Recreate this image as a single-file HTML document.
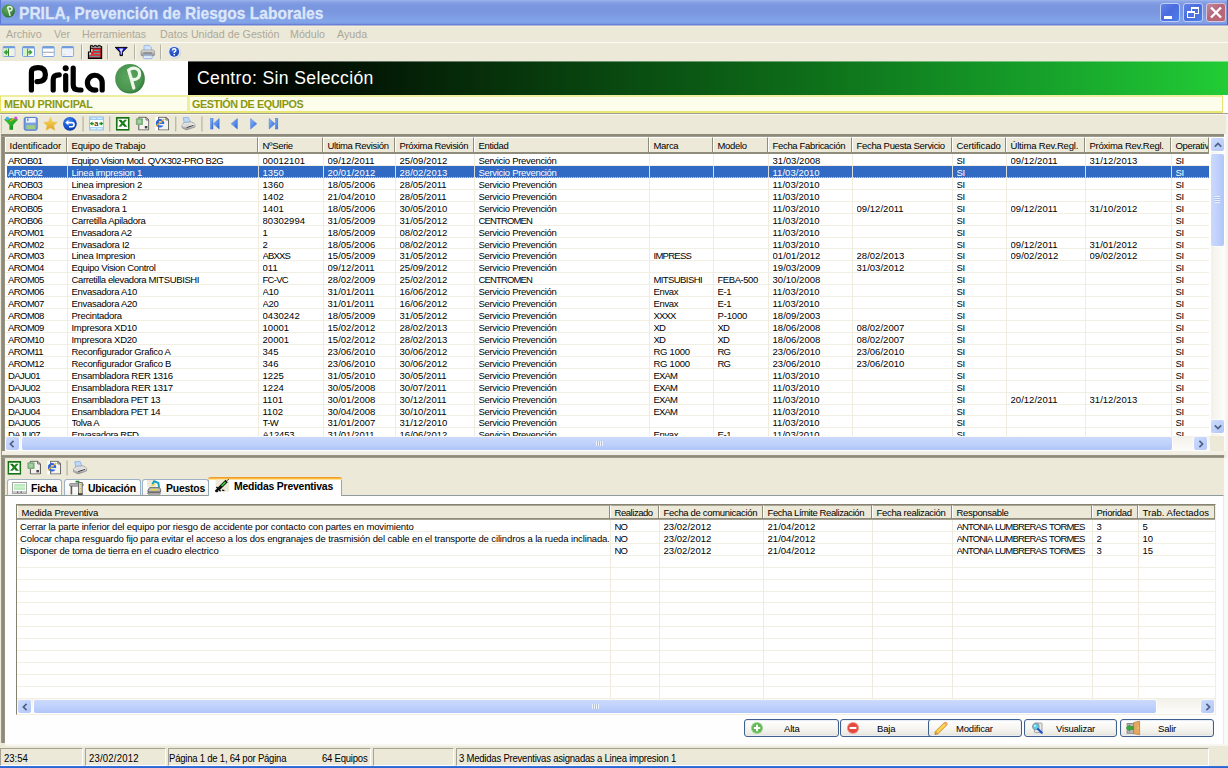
<!DOCTYPE html>
<html><head><meta charset="utf-8"><title>PRILA</title>
<style>
*{box-sizing:border-box;margin:0;padding:0}
html,body{width:1228px;height:768px;overflow:hidden;background:#ECE9D8;font-family:"Liberation Sans",sans-serif;font-size:9px;color:#000}
.abs{position:absolute}
#titlebar{position:absolute;left:0;top:0;width:1228px;height:26px;
 background:linear-gradient(to bottom,#9DB5EC 0px,#86A1E5 2px,#7B97E0 5px,#7A96DF 12px,#7F9EE4 17px,#82A5E8 22px,#7C9AE3 23.5px,#6A80D6 24.5px,#6478D2 25px,#A9B2DC 25.2px,#B5BBDA 26px)}
#titletext{-webkit-text-stroke:0.3px #DCE6FA;position:absolute;left:18.7px;top:4px;font-weight:bold;font-size:17px;color:#DCE6FA;white-space:pre;letter-spacing:0px;line-height:20px;transform:scaleX(0.915);transform-origin:0 0}
.tbtn{position:absolute;top:3px;width:20px;height:19px;border:1px solid #BFCEF4;border-radius:3px;background:linear-gradient(135deg,#6283E8 0%,#4A6BDE 45%,#4C7FE8 100%)}
#menubar{position:absolute;left:0;top:26px;width:1228px;height:17px;background:#ECE9D8;border-top:1px solid #F7EFD3}
.menu{position:absolute;top:27px;font-size:10.7px;color:#ACA899;line-height:14px;white-space:pre}
#tb1{position:absolute;left:0;top:42px;width:1228px;height:19px;border-top:1px solid #FBFAF5}
.vsep{position:absolute;width:2px;border-left:1px solid #C5C2B2;border-right:1px solid #FFFFFF}
#logo{position:absolute;left:0;top:61px;width:188px;height:35px;background:#fff}
#banner{position:absolute;left:188px;top:61px;width:1040px;height:34px;background:linear-gradient(to right,#000 0px,#020a02 110px,#06300a 300px,#0d6a18 600px,#16a02a 850px,#1fc333 1000px,#22cc36 1040px)}
#bannertext{position:absolute;left:9px;top:6px;color:#fff;font-size:17.6px;line-height:22px;white-space:pre;letter-spacing:0.36px}
.ylabel{position:absolute;top:95px;height:18px;background:#FDFDEC;border:2px solid #EFED9E;border-bottom-color:#E9E774;color:#8A9812;font-weight:bold;font-size:10.8px;letter-spacing:-0.25px;line-height:14px;padding-left:2px;white-space:pre}
#tb2{position:absolute;left:0;top:113px;width:1228px;height:21px}
.ic{position:absolute;width:16px;height:16px}
</style></head><body>
<!-- TITLE BAR -->
<div id="titlebar">
 <svg class="abs" style="left:0.8px;top:3.2px" width="16" height="16" viewBox="0 0 16 16">
  <defs><radialGradient id="gball" cx="40%" cy="35%" r="70%"><stop offset="0" stop-color="#5FA85F"/><stop offset="0.7" stop-color="#3C8A40"/><stop offset="1" stop-color="#25602A"/></radialGradient></defs>
  <circle cx="7.4" cy="8" r="6.5" fill="url(#gball)"/>
  <path d="M9 12.4 Q8 8 6.6 4.4 Q9.4 2.6 11 5 Q11.6 7.4 8.6 8" fill="none" stroke="#E8F2E4" stroke-width="1.5" stroke-linecap="round" stroke-linejoin="round"/>
 </svg>
 <div class="abs" style="left:0;top:0;width:1px;height:25px;background:#5F7AD8"></div><div class="abs" style="left:1227px;top:0;width:1px;height:25px;background:#4A62CC"></div><div id="titletext">PRILA, Prevención de Riesgos Laborales</div>
 <div class="tbtn" style="left:1160px"><div class="abs" style="left:3px;top:12px;width:8px;height:3px;background:#fff"></div></div>
 <div class="tbtn" style="left:1183px">
   <div class="abs" style="left:7px;top:3px;width:8px;height:7px;border:1px solid #fff;border-top-width:2px"></div>
   <div class="abs" style="left:3px;top:7px;width:8px;height:7px;border:1px solid #fff;border-top-width:2px;background:#4F74E2"></div>
 </div>
 <div class="tbtn" style="left:1206px;background:linear-gradient(135deg,#C08A9E 0%,#B5677A 45%,#BD6670 100%);border-color:#D9C4DC">
   <svg class="abs" style="left:0;top:0" width="18" height="17" viewBox="0 0 18 17"><path d="M4 3.5 L14 13.5 M14 3.5 L4 13.5" stroke="#fff" stroke-width="2.4" stroke-linecap="butt"/></svg>
 </div>
</div>
<!-- MENU BAR -->
<div id="menubar"></div>
<div class="menu" style="left:6px">Archivo</div>
<div class="menu" style="left:54px">Ver</div>
<div class="menu" style="left:82px">Herramientas</div>
<div class="menu" style="left:160px">Datos Unidad de Gestión</div>
<div class="menu" style="left:290px">Módulo</div>
<div class="menu" style="left:337px">Ayuda</div>
<!-- TOOLBAR 1 -->
<div id="tb1"></div>
<svg class="abs" style="left:0;top:43px" width="190" height="18" viewBox="0 43 190 18">
<defs>
<linearGradient id="winb" x1="0" y1="0" x2="0" y2="1"><stop offset="0" stop-color="#6B97DA"/><stop offset="1" stop-color="#7FA6E2"/></linearGradient>
<linearGradient id="prbody" x1="0" y1="0" x2="0" y2="1"><stop offset="0" stop-color="#E4E4E4"/><stop offset="0.5" stop-color="#B8B8B8"/><stop offset="1" stop-color="#8E8E8E"/></linearGradient>
<radialGradient id="helpg" cx="40%" cy="35%" r="70%"><stop offset="0" stop-color="#3C6CE0"/><stop offset="1" stop-color="#1640B0"/></radialGradient>

</defs>
<!-- icon1 -->
<svg x="2.5" y="46" width="13" height="11" viewBox="0 0 13 11"><rect x="0.5" y="0.5" width="12" height="10" rx="1.2" fill="#fff" stroke="#78A2E0" stroke-width="1"/><rect x="0.5" y="0.5" width="12" height="2" rx="1" fill="#6F9BDC"/></svg>
<rect x="3.5" y="48.5" width="5" height="7.5" fill="#DDF5CF"/>
<rect x="10.5" y="48.5" width="4" height="7.5" fill="#F1F0E6"/>
<rect x="8" y="48.5" width="1" height="7.5" fill="#2E8B2E"/>
<path d="M3.5 52.2 L7 49.2 L7 51.2 L8 51.2 L8 53.2 L7 53.2 L7 55.2 Z" fill="#3FA23F"/>
<!-- icon2 -->
<svg x="22" y="46" width="13" height="11" viewBox="0 0 13 11"><rect x="0.5" y="0.5" width="12" height="10" rx="1.2" fill="#fff" stroke="#78A2E0" stroke-width="1"/><rect x="0.5" y="0.5" width="12" height="2" rx="1" fill="#6F9BDC"/></svg>
<rect x="23" y="48.5" width="5" height="7.5" fill="#D5F5C5"/>
<rect x="27.2" y="48.5" width="1" height="7.5" fill="#2E8B2E"/>
<path d="M32.6 52.2 L29.4 49.2 L29.4 51.2 L28.2 51.2 L28.2 53.2 L29.4 53.2 L29.4 55.2 Z" fill="#3FA23F"/>
<!-- icon3 -->
<svg x="41.8" y="46" width="13" height="11" viewBox="0 0 13 11"><rect x="0.5" y="0.5" width="12" height="10" rx="1.2" fill="#fff" stroke="#78A2E0" stroke-width="1"/><rect x="0.5" y="0.5" width="12" height="2" rx="1" fill="#6F9BDC"/></svg>
<rect x="42.8" y="51.8" width="11" height="0.9" fill="#8C96A8"/>
<rect x="43.8" y="54.3" width="2" height="0.7" fill="#E8C890"/>
<!-- icon4 -->
<svg x="61.2" y="46" width="13" height="11" viewBox="0 0 13 11"><rect x="0.5" y="0.5" width="12" height="10" rx="1.2" fill="#fff" stroke="#78A2E0" stroke-width="1"/><rect x="0.5" y="0.5" width="12" height="2" rx="1" fill="#6F9BDC"/></svg>
<rect x="62.4" y="48.6" width="10.6" height="7.2" fill="#EEF3FB"/>
<rect x="63.2" y="54.3" width="2" height="0.7" fill="#E8C890"/>
<!-- sep -->
<rect x="81" y="44.5" width="1" height="15" fill="#A9A697"/><rect x="82" y="44.5" width="1" height="15" fill="#FAF9F3"/>
<!-- fortress -->
<path d="M90.5 46 L90.5 52 L88.5 52 L88.5 58.3 L101.5 58.3 L101.5 46" fill="none" stroke="#000" stroke-width="1.2"/>
<path d="M90.6 48.6 L90.6 45.4 L92.6 45.4 L92.6 46.6 L94.2 46.6 L94.2 45.4 L96.4 45.4 L96.4 46.6 L98 46.6 L98 45.4 L100.2 45.4 L100.2 46.6 L101.6 46.6 L101.6 48.6 Z" fill="#9C9C9C" stroke="#000" stroke-width="0.9"/>
<rect x="92.5" y="48.6" width="8.6" height="3.4" fill="#E0202A"/>
<rect x="91" y="51.6" width="10.2" height="3.2" fill="#E0202A"/>
<rect x="89.2" y="54.6" width="12" height="3.2" fill="#E0202A"/>
<rect x="94" y="50" width="5.5" height="0.9" fill="#30C8C8"/><rect x="93.5" y="52.8" width="6.5" height="0.9" fill="#30C8C8"/><rect x="90.2" y="55.8" width="9.5" height="0.9" fill="#30C8C8"/>
<rect x="100.8" y="48.5" width="1.3" height="10" fill="#000"/>
<rect x="88.3" y="57.6" width="13.6" height="1.1" fill="#000"/>
<!-- sep -->
<rect x="107.2" y="44.5" width="1" height="15" fill="#A9A697"/><rect x="108.2" y="44.5" width="1" height="15" fill="#FAF9F3"/>
<!-- funnel -->
<path d="M115.2 47.4 L127.2 47.4 L122.4 52.2 L122.4 55.6 L120 55.6 L120 52.2 Z" fill="#1414E8" stroke="#000" stroke-width="1" stroke-linejoin="round"/>
<path d="M119 48.4 L123.4 48.4 L121.8 51.8 L121.8 54.6 L120.7 54.6 L120.7 51.8 Z" fill="#D8DCF0"/>
<!-- sep -->
<rect x="134.2" y="44.5" width="1" height="15" fill="#A9A697"/><rect x="135.2" y="44.5" width="1" height="15" fill="#FAF9F3"/>
<!-- printer -->
<path d="M144 51 L144 46.2 Q144 45.4 144.8 45.4 L149.4 45.4 L151.6 47.6 L151.6 51 Z" fill="#CFE1F8" stroke="#8FB4E6" stroke-width="0.9"/>
<rect x="141" y="50" width="13.6" height="6" rx="1.6" fill="url(#prbody)" stroke="#8A8A8A" stroke-width="0.6"/>
<rect x="143.4" y="52.2" width="8.8" height="1.6" fill="#8C8C8C"/>
<rect x="143.4" y="55.6" width="8.8" height="3" rx="0.8" fill="#E2ECFA" stroke="#8FB4E6" stroke-width="0.9"/>
<!-- sep -->
<rect x="160.2" y="44.5" width="1" height="15" fill="#A9A697"/><rect x="161.2" y="44.5" width="1" height="15" fill="#FAF9F3"/>
<!-- help -->
<circle cx="174.7" cy="52.3" r="6.3" fill="#B9BCC6" opacity=".75"/>
<circle cx="174.2" cy="51.8" r="6.3" fill="#E6E9F1"/>
<circle cx="174.2" cy="51.8" r="4.9" fill="url(#helpg)"/>
<path d="M172.5 50.4 Q172.5 48.7 174.2 48.7 Q175.9 48.7 175.9 50.2 Q175.9 51.2 174.3 52.1 L174.3 53" fill="none" stroke="#fff" stroke-width="1.4"/>
<circle cx="174.3" cy="54.6" r="0.85" fill="#fff"/>
</svg>

<!-- LOGO + BANNER -->
<div id="logo"><svg class="abs" style="left:0;top:0" width="188" height="35" viewBox="0 61 188 35">
<defs><radialGradient id="gball2" cx="45%" cy="45%" r="58%"><stop offset="0" stop-color="#5BA75F"/><stop offset="0.75" stop-color="#4A9650"/><stop offset="0.93" stop-color="#38803F"/><stop offset="1" stop-color="#2A6A32"/></radialGradient></defs>
<g fill="none" stroke="#000" stroke-width="5.2" stroke-linecap="round" stroke-linejoin="round">
<path d="M31.4 90 L31.4 72 Q31.4 67.6 38 67.6 Q45.4 67.6 45.4 74.6 Q45.4 81.6 38 81.6 L37 81.6"/>
<path d="M53.2 90 L53.2 79.5 Q53.2 74.8 59.2 74.8"/>
<path d="M65.7 75.5 L65.7 90"/>
<path d="M73.2 68 L73.2 85 Q73.2 90 79 90 L81 90"/>
<path d="M102.2 90 L102.2 83 A7.4 7.4 0 1 0 95.8 90"/>
</g>
<circle cx="65.7" cy="68.2" r="3" fill="#000"/>
<circle cx="130" cy="78.8" r="14.8" fill="url(#gball2)"/>
<path d="M133.8 88 Q131.6 80 128.6 70 Q133.6 66.6 138 69.6 Q141 73.4 138.4 77.6 Q135.6 80.2 132.2 79.4" fill="none" stroke="#EEF5EA" stroke-width="3.2" stroke-linecap="round" stroke-linejoin="round"/>
</svg>
</div>
<div class="abs" style="left:188px;top:61px;width:1040px;height:1px;background:#fff;z-index:2;opacity:.4"></div><div id="banner"><div id="bannertext">Centro: Sin Selección</div></div>
<div class="ylabel" style="left:0;width:188px;border-right:none;border-left:1px solid #E8E664;padding-left:3px">MENU PRINCIPAL</div>
<div class="abs" style="left:1223px;top:95px;width:5px;height:18px;background:#fff"></div><div class="ylabel" style="left:187px;width:1036px;border-left-width:3px;border-right:1px solid #E6E46E;letter-spacing:-0.42px">GESTIÓN DE EQUIPOS</div>
<!-- TOOLBAR 2 -->
<div id="tb2"></div>
<div class="abs" style="left:0;top:113px;width:1228px;height:1px;background:#A19E8F"></div>
<div class="abs" style="left:0;top:114px;width:1228px;height:1px;background:#F9F7F0"></div>
<svg class="abs" style="left:0;top:115px" width="290" height="18" viewBox="0 115 290 18">
<defs>
<linearGradient id="fung" x1="0" y1="0" x2="1" y2="1"><stop offset="0" stop-color="#3CD83C"/><stop offset="1" stop-color="#0E7A12"/></linearGradient>
<linearGradient id="starg" x1="0" y1="0" x2="0" y2="1"><stop offset="0" stop-color="#FBDF62"/><stop offset="1" stop-color="#E0A020"/></linearGradient>
<radialGradient id="undog" cx="40%" cy="30%" r="75%"><stop offset="0" stop-color="#3C82F0"/><stop offset="0.6" stop-color="#1656D0"/><stop offset="1" stop-color="#0A3296"/></radialGradient>
<linearGradient id="navg" x1="0" y1="0" x2="1" y2="1"><stop offset="0" stop-color="#8FBCF8"/><stop offset="1" stop-color="#2A62D8"/></linearGradient>
<linearGradient id="prbody2" x1="0" y1="0" x2="0" y2="1"><stop offset="0" stop-color="#F2F2F2"/><stop offset="0.6" stop-color="#C4C4C4"/><stop offset="1" stop-color="#8E8E8E"/></linearGradient>




</defs>
<!-- left border -->
<rect x="1" y="115" width="1" height="19" fill="#C8C5B7"/>
<!-- green funnel -->
<path d="M4.2 119.6 L18 119.6 L13 125 L13 129.8 L9.4 129.8 L9.4 125 Z" fill="url(#fung)"/>
<ellipse cx="11.1" cy="119.8" rx="6.8" ry="1.6" fill="#2AB42A"/>
<circle cx="7.4" cy="118.6" r="1.8" fill="#4AA8F0"/><circle cx="15.8" cy="118" r="1.6" fill="#E040D8"/><path d="M10 121 L13.6 118.8" stroke="#F0A020" stroke-width="1.4"/>
<!-- disk -->
<rect x="24.2" y="117.4" width="13" height="12.8" rx="1.6" fill="#7AA0E4" stroke="#4D78CC" stroke-width="1"/>
<rect x="26" y="118" width="9.6" height="4.6" fill="#EDF3FC"/><rect x="27.2" y="118.4" width="1.2" height="2.6" fill="#4D78CC"/>
<rect x="26.4" y="125.2" width="8.8" height="4" fill="#9FCB7E"/>
<!-- star -->
<path d="M50.4 117.6 L52.4 122 L57.2 122.4 L53.6 125.6 L54.8 130.2 L50.4 127.8 L46 130.2 L47.2 125.6 L43.6 122.4 L48.4 122 Z" fill="url(#starg)" stroke="#E8B838" stroke-width="0.5" stroke-linejoin="round"/>
<!-- undo -->
<circle cx="69.9" cy="123.8" r="6.9" fill="url(#undog)"/>
<path d="M67.2 122.6 L72 122.6 Q74 122.6 74 124.6 Q74 126.8 72 126.8 L69 126.8" fill="none" stroke="#fff" stroke-width="1.6"/>
<path d="M65.2 122.6 L68.4 120 L68.4 125.2 Z" fill="#fff"/>
<!-- sep -->
<rect x="82.4" y="116.5" width="1.4" height="15" fill="#BDBAAB"/>
<!-- a icon -->
<rect x="89.6" y="117" width="13.8" height="13" fill="#fff" stroke="#8CC4F6" stroke-width="1"/>
<rect x="90" y="117.4" width="13" height="2.6" fill="#9CCCF8"/><rect x="90" y="127" width="13" height="2.6" fill="#A8D4FA"/>
<rect x="91.4" y="118.2" width="4.4" height="0.8" fill="#F0F8FF"/><rect x="97.4" y="118.2" width="4.4" height="0.8" fill="#F0F8FF"/>
<rect x="91.4" y="128" width="4.4" height="0.8" fill="#F0F8FF"/><rect x="97.4" y="128" width="4.4" height="0.8" fill="#F0F8FF"/>
<path d="M89.8 123.6 L92.4 121.4 L92.4 122.8 L93.8 122.8 L93.8 124.4 L92.4 124.4 L92.4 125.8 Z" fill="#189018"/>
<path d="M103.4 123.6 L100.8 121.4 L100.8 122.8 L99.4 122.8 L99.4 124.4 L100.8 124.4 L100.8 125.8 Z" fill="#189018"/>
<text x="94.2" y="126.3" font-family="Liberation Sans" font-size="7.4" fill="#000">a</text>
<!-- sep -->
<rect x="109" y="116.5" width="1.4" height="15" fill="#BDBAAB"/>
<svg x="115.8" y="116.9" width="13.9" height="13.9" viewBox="0 0 14 14"><rect x="0.9" y="0.9" width="12.2" height="12.2" fill="#fff" stroke="#157015" stroke-width="1.8"/><path d="M2.4 2.8 L5.4 2.8 L11.6 9.8 L8.6 9.8 Z" fill="#157015"/><path d="M11.4 2.8 L8.6 2.8 L2.6 9.8 L5.4 9.8 Z" fill="#1E8A1E"/><rect x="1.5" y="10.6" width="11" height="1.2" fill="#fff"/></svg>
<svg x="135.4" y="116.6" width="14" height="14" viewBox="0 0 14 14"><path d="M3.4 0.6 L10.6 0.6 L13.4 3.4 L13.4 13.4 L3.4 13.4 Z" fill="#F4F3EE" stroke="#555" stroke-width="1"/><path d="M10.6 0.6 L10.6 3.4 L13.4 3.4" fill="none" stroke="#555" stroke-width="0.8"/><rect x="0.4" y="1.6" width="7.2" height="6.8" rx="1" fill="#7DB07D"/><rect x="2.2" y="3.2" width="3.6" height="3.6" fill="#A6CFA6"/><rect x="9.4" y="9.4" width="2.6" height="2.4" fill="#444"/></svg>
<svg x="155.2" y="116.6" width="14" height="14" viewBox="0 0 14 14"><rect x="0" y="0" width="4" height="14" fill="#fff"/><path d="M3.4 0.6 L10.6 0.6 L13.4 3.4 L13.4 13.4 L3.4 13.4 Z" fill="#F4F3EE" stroke="#666" stroke-width="1.1"/><path d="M10.6 0.6 L10.6 3.4 L13.4 3.4" fill="none" stroke="#666" stroke-width="0.8"/><circle cx="4.8" cy="6.6" r="3.2" fill="none" stroke="#2A66E4" stroke-width="2"/><rect x="3" y="6" width="5.6" height="1.3" fill="#2A66E4"/><rect x="6" y="7.4" width="3" height="1.6" fill="#F4F3EE"/><path d="M0.6 9.6 Q4 7 9 2.6" fill="none" stroke="#E8B020" stroke-width="1.1"/></svg>
<rect x="175" y="116.5" width="1.4" height="15" fill="#BDBAAB"/>
<svg x="181.2" y="116.8" width="14.6" height="13.8" viewBox="0 0 15 14"><path d="M3.2 6.6 L2 1 L7.4 0.4 L9.6 5.8 Z" fill="#BCD8FA" stroke="#86AEE6" stroke-width="0.8"/><path d="M0.8 8 L3.4 5.6 L10.6 5.2 L14.2 7.2 L14.2 10.4 L5.4 13.4 L0.8 11.2 Z" fill="url(#prbody2)" stroke="#8A8A8A" stroke-width="0.7"/><path d="M5.6 10.2 L12.6 8.2 L12.6 9.2 L5.6 11.4 Z" fill="#333"/><path d="M0.8 8 L5.4 10 L14.2 7.2" fill="none" stroke="#fff" stroke-width="0.7"/></svg>
<rect x="201.2" y="116.5" width="1.4" height="15" fill="#BDBAAB"/>
<!-- nav -->
<g fill="url(#navg)" stroke="#3E78E0" stroke-width="0.5">
<rect x="210.6" y="118.6" width="2.4" height="10.4"/><path d="M219.2 118.6 L219.2 129 L213.4 123.8 Z"/>
<path d="M237.4 118.6 L237.4 129 L231.2 123.8 Z"/>
<path d="M250.6 118.6 L250.6 129 L256.8 123.8 Z"/>
<path d="M269.2 118.6 L269.2 129 L275 123.8 Z"/><rect x="275.4" y="118.6" width="2.4" height="10.4"/>
</g>
</svg>

<style>
.hc{position:absolute;top:0;height:15px;border-left:1px solid #fff;border-top:1px solid #fff;border-right:1px solid #8F8C7C;overflow:hidden;white-space:pre}
.hc span{position:absolute;left:3.5px;top:2px;font-size:9.5px;letter-spacing:-0.32px;line-height:11px}
.c{position:absolute;height:12px;line-height:11px;font-size:9.5px;letter-spacing:-0.25px;white-space:pre;overflow:hidden;padding-top:1px}
.c.s{color:#fff}
.c.d{letter-spacing:0.02px}
.c.id{letter-spacing:-0.75px}
.sbtn{position:absolute;width:13px;height:13px;border-radius:2px;background:linear-gradient(135deg,#CEDBFC 0%,#BFD0FA 55%,#B2C6F6 100%);box-shadow:0 0 0 1px rgba(255,255,255,.55)}
.hthumb{position:absolute;height:13px;border-radius:2px;background:linear-gradient(to bottom,#CBD9FC 0,#C1D2FB 45%,#B0C6F8 100%);box-shadow:0 0 0 1px rgba(255,255,255,.55)}
.vthumb{position:absolute;width:13px;border-radius:2px;background:linear-gradient(to right,#CBD9FC 0,#C1D2FB 45%,#B0C6F8 100%);box-shadow:0 0 0 1px rgba(255,255,255,.55)}
.track{position:absolute;background:#F6F5EF}
</style>
<!-- left gray bar + frames -->
<div class="abs" style="left:1px;top:134px;width:4px;height:609px;background:linear-gradient(to right,#A6A394 0,#8D8A7B 1px,#8D8A7B 3px,#A19E8F 4px)"></div>
<div class="abs" style="left:1px;top:134px;width:1223px;height:3px;background:linear-gradient(to bottom,#8D8A7B 0,#8D8A7B 2px,#B5B2A4 3px)"></div>
<div class="abs" style="left:1224px;top:134px;width:2px;height:321px;background:#FBFAF6"></div><div class="abs" style="left:1226px;top:114px;width:2px;height:632px;background:#F5F3EB"></div>
<!-- grid 1 white bg -->
<div class="abs" style="left:5px;top:137px;width:1219px;height:300px;background:#fff"></div>
<div id="g1" class="abs" style="left:5px;top:137px;width:1204px;height:299px;overflow:hidden;background:#fff">
<div class="abs" style="left:0;top:0;width:1204px;height:15px;background:#ECE9D8"></div>
<div class="abs" style="left:0;top:15px;width:1204px;height:2px;background:#8F8C7C"></div>
<div class="hc" style="left:0px;width:62px"><span style="letter-spacing:0.0px">Identificador</span></div>
<div class="hc" style="left:62px;width:191px"><span style="letter-spacing:-0.2px">Equipo de Trabajo</span></div>
<div class="hc" style="left:253px;width:65px"><span>NºSerie</span></div>
<div class="hc" style="left:318px;width:72px"><span>Ultima Revisión</span></div>
<div class="hc" style="left:390px;width:79px"><span>Próxima Revisión</span></div>
<div class="hc" style="left:469px;width:175px"><span>Entidad</span></div>
<div class="hc" style="left:644px;width:64px"><span>Marca</span></div>
<div class="hc" style="left:708px;width:55px"><span>Modelo</span></div>
<div class="hc" style="left:763px;width:84px"><span>Fecha Fabricación</span></div>
<div class="hc" style="left:847px;width:100px"><span>Fecha Puesta Servicio</span></div>
<div class="hc" style="left:947px;width:54px"><span style="letter-spacing:-0.1px">Certificado</span></div>
<div class="hc" style="left:1001px;width:79px"><span style="letter-spacing:-0.18px">Última Rev.Regl.</span></div>
<div class="hc" style="left:1080px;width:86px"><span style="letter-spacing:-0.25px">Próxima Rev.Regl.</span></div>
<div class="hc" style="left:1166px;width:38px"><span>Operativo</span></div>
<div class="abs" style="left:0;top:28px;width:1204px;height:1px;background:#F1EFE2"></div>
<div class="c id" style="left:3px;top:17px;width:57px;letter-spacing:-0.56px;word-spacing:0.00px">AROB01</div>
<div class="c eq1" style="left:66.5px;top:17px;width:186px;letter-spacing:-0.42px;word-spacing:0.00px">Equipo Vision Mod. QVX302-PRO B2G</div>
<div class="c" style="left:257.5px;top:17px;width:60px;letter-spacing:0.03px;word-spacing:0.00px">00012101</div>
<div class="c d" style="left:322.5px;top:17px;width:67px;letter-spacing:0.03px;word-spacing:0.00px">09/12/2011</div>
<div class="c d" style="left:394.5px;top:17px;width:74px;letter-spacing:0.03px;word-spacing:0.00px">25/09/2012</div>
<div class="c" style="left:473.5px;top:17px;width:170px;letter-spacing:-0.31px;word-spacing:0.00px">Servicio Prevención</div>
<div class="c d" style="left:767.5px;top:17px;width:79px;letter-spacing:0.03px;word-spacing:0.00px">31/03/2008</div>
<div class="c" style="left:951.5px;top:17px;width:49px;letter-spacing:-0.42px;word-spacing:0.00px">SI</div>
<div class="c d" style="left:1005.5px;top:17px;width:74px;letter-spacing:0.03px;word-spacing:0.00px">09/12/2011</div>
<div class="c d" style="left:1084.5px;top:17px;width:81px;letter-spacing:0.03px;word-spacing:0.00px">31/12/2013</div>
<div class="c" style="left:1170.5px;top:17px;width:33px;letter-spacing:-0.42px;word-spacing:0.00px">SI</div>
<div class="abs" style="left:2px;top:29px;width:1202px;height:11px;background:#316AC5"></div>
<div class="abs" style="left:2px;top:40px;width:1202px;height:1px;background:repeating-linear-gradient(to right,#F0C890 0,#F0C890 1px,#5A84CC 1px,#5A84CC 2px)"></div>
<div class="c s id" style="left:3px;top:29px;width:57px;letter-spacing:-0.56px;word-spacing:0.00px">AROB02</div>
<div class="c s eq" style="left:66.5px;top:29px;width:186px;letter-spacing:-0.27px;word-spacing:0.00px">Linea impresion 1</div>
<div class="c s" style="left:257.5px;top:29px;width:60px;letter-spacing:0.03px;word-spacing:0.00px">1350</div>
<div class="c s d" style="left:322.5px;top:29px;width:67px;letter-spacing:0.03px;word-spacing:0.00px">20/01/2012</div>
<div class="c s d" style="left:394.5px;top:29px;width:74px;letter-spacing:0.03px;word-spacing:0.00px">28/02/2013</div>
<div class="c s" style="left:473.5px;top:29px;width:170px;letter-spacing:-0.31px;word-spacing:0.00px">Servicio Prevención</div>
<div class="c s d" style="left:767.5px;top:29px;width:79px;letter-spacing:0.03px;word-spacing:0.00px">11/03/2010</div>
<div class="c s" style="left:951.5px;top:29px;width:49px;letter-spacing:-0.42px;word-spacing:0.00px">SI</div>
<div class="c s" style="left:1170.5px;top:29px;width:33px;letter-spacing:-0.42px;word-spacing:0.00px">SI</div>
<div class="abs" style="left:0;top:52px;width:1204px;height:1px;background:#F1EFE2"></div>
<div class="c id" style="left:3px;top:41px;width:57px;letter-spacing:-0.56px;word-spacing:0.00px">AROB03</div>
<div class="c eq" style="left:66.5px;top:41px;width:186px;letter-spacing:-0.27px;word-spacing:0.00px">Linea impresion 2</div>
<div class="c" style="left:257.5px;top:41px;width:60px;letter-spacing:0.03px;word-spacing:0.00px">1360</div>
<div class="c d" style="left:322.5px;top:41px;width:67px;letter-spacing:0.03px;word-spacing:0.00px">18/05/2006</div>
<div class="c d" style="left:394.5px;top:41px;width:74px;letter-spacing:0.03px;word-spacing:0.00px">28/05/2011</div>
<div class="c" style="left:473.5px;top:41px;width:170px;letter-spacing:-0.31px;word-spacing:0.00px">Servicio Prevención</div>
<div class="c d" style="left:767.5px;top:41px;width:79px;letter-spacing:0.03px;word-spacing:0.00px">11/03/2010</div>
<div class="c" style="left:951.5px;top:41px;width:49px;letter-spacing:-0.42px;word-spacing:0.00px">SI</div>
<div class="c" style="left:1170.5px;top:41px;width:33px;letter-spacing:-0.42px;word-spacing:0.00px">SI</div>
<div class="abs" style="left:0;top:64px;width:1204px;height:1px;background:#F1EFE2"></div>
<div class="c id" style="left:3px;top:53px;width:57px;letter-spacing:-0.56px;word-spacing:0.00px">AROB04</div>
<div class="c eq" style="left:66.5px;top:53px;width:186px;letter-spacing:-0.28px;word-spacing:0.00px">Envasadora 2</div>
<div class="c" style="left:257.5px;top:53px;width:60px;letter-spacing:0.03px;word-spacing:0.00px">1402</div>
<div class="c d" style="left:322.5px;top:53px;width:67px;letter-spacing:0.03px;word-spacing:0.00px">21/04/2010</div>
<div class="c d" style="left:394.5px;top:53px;width:74px;letter-spacing:0.03px;word-spacing:0.00px">28/05/2011</div>
<div class="c" style="left:473.5px;top:53px;width:170px;letter-spacing:-0.31px;word-spacing:0.00px">Servicio Prevención</div>
<div class="c d" style="left:767.5px;top:53px;width:79px;letter-spacing:0.03px;word-spacing:0.00px">11/03/2010</div>
<div class="c" style="left:951.5px;top:53px;width:49px;letter-spacing:-0.42px;word-spacing:0.00px">SI</div>
<div class="c" style="left:1170.5px;top:53px;width:33px;letter-spacing:-0.42px;word-spacing:0.00px">SI</div>
<div class="abs" style="left:0;top:76px;width:1204px;height:1px;background:#F1EFE2"></div>
<div class="c id" style="left:3px;top:65px;width:57px;letter-spacing:-0.56px;word-spacing:0.00px">AROB05</div>
<div class="c eq" style="left:66.5px;top:65px;width:186px;letter-spacing:-0.28px;word-spacing:0.00px">Envasadora 1</div>
<div class="c" style="left:257.5px;top:65px;width:60px;letter-spacing:0.03px;word-spacing:0.00px">1401</div>
<div class="c d" style="left:322.5px;top:65px;width:67px;letter-spacing:0.03px;word-spacing:0.00px">18/05/2006</div>
<div class="c d" style="left:394.5px;top:65px;width:74px;letter-spacing:0.03px;word-spacing:0.00px">30/05/2010</div>
<div class="c" style="left:473.5px;top:65px;width:170px;letter-spacing:-0.31px;word-spacing:0.00px">Servicio Prevención</div>
<div class="c d" style="left:767.5px;top:65px;width:79px;letter-spacing:0.03px;word-spacing:0.00px">11/03/2010</div>
<div class="c d" style="left:851.5px;top:65px;width:95px;letter-spacing:0.03px;word-spacing:0.00px">09/12/2011</div>
<div class="c" style="left:951.5px;top:65px;width:49px;letter-spacing:-0.42px;word-spacing:0.00px">SI</div>
<div class="c d" style="left:1005.5px;top:65px;width:74px;letter-spacing:0.03px;word-spacing:0.00px">09/12/2011</div>
<div class="c d" style="left:1084.5px;top:65px;width:81px;letter-spacing:0.03px;word-spacing:0.00px">31/10/2012</div>
<div class="c" style="left:1170.5px;top:65px;width:33px;letter-spacing:-0.42px;word-spacing:0.00px">SI</div>
<div class="abs" style="left:0;top:88px;width:1204px;height:1px;background:#F1EFE2"></div>
<div class="c id" style="left:3px;top:77px;width:57px;letter-spacing:-0.56px;word-spacing:0.00px">AROB06</div>
<div class="c eq" style="left:66.5px;top:77px;width:186px;letter-spacing:-0.31px;word-spacing:0.00px">Carretilla Apiladora</div>
<div class="c" style="left:257.5px;top:77px;width:60px;letter-spacing:0.03px;word-spacing:0.00px">80302994</div>
<div class="c d" style="left:322.5px;top:77px;width:67px;letter-spacing:0.03px;word-spacing:0.00px">31/05/2009</div>
<div class="c d" style="left:394.5px;top:77px;width:74px;letter-spacing:0.03px;word-spacing:0.00px">31/05/2012</div>
<div class="c" style="left:473.5px;top:77px;width:170px;letter-spacing:-0.85px;word-spacing:0.00px">CENTROMEN</div>
<div class="c d" style="left:767.5px;top:77px;width:79px;letter-spacing:0.03px;word-spacing:0.00px">11/03/2010</div>
<div class="c" style="left:951.5px;top:77px;width:49px;letter-spacing:-0.42px;word-spacing:0.00px">SI</div>
<div class="c" style="left:1170.5px;top:77px;width:33px;letter-spacing:-0.42px;word-spacing:0.00px">SI</div>
<div class="abs" style="left:0;top:100px;width:1204px;height:1px;background:#F1EFE2"></div>
<div class="c id" style="left:3px;top:89px;width:57px;letter-spacing:-0.56px;word-spacing:0.00px">AROM01</div>
<div class="c eq" style="left:66.5px;top:89px;width:186px;letter-spacing:-0.32px;word-spacing:0.00px">Envasadora A2</div>
<div class="c" style="left:257.5px;top:89px;width:60px;letter-spacing:0.03px;word-spacing:0.00px">1</div>
<div class="c d" style="left:322.5px;top:89px;width:67px;letter-spacing:0.03px;word-spacing:0.00px">18/05/2009</div>
<div class="c d" style="left:394.5px;top:89px;width:74px;letter-spacing:0.03px;word-spacing:0.00px">08/02/2012</div>
<div class="c" style="left:473.5px;top:89px;width:170px;letter-spacing:-0.31px;word-spacing:0.00px">Servicio Prevención</div>
<div class="c d" style="left:767.5px;top:89px;width:79px;letter-spacing:0.03px;word-spacing:0.00px">11/03/2010</div>
<div class="c" style="left:951.5px;top:89px;width:49px;letter-spacing:-0.42px;word-spacing:0.00px">SI</div>
<div class="c" style="left:1170.5px;top:89px;width:33px;letter-spacing:-0.42px;word-spacing:0.00px">SI</div>
<div class="abs" style="left:0;top:111px;width:1204px;height:1px;background:#F1EFE2"></div>
<div class="c id" style="left:3px;top:101px;width:57px;letter-spacing:-0.56px;word-spacing:0.00px">AROM02</div>
<div class="c eq" style="left:66.5px;top:101px;width:186px;letter-spacing:-0.26px;word-spacing:0.00px">Envasadora I2</div>
<div class="c" style="left:257.5px;top:101px;width:60px;letter-spacing:0.03px;word-spacing:0.00px">2</div>
<div class="c d" style="left:322.5px;top:101px;width:67px;letter-spacing:0.03px;word-spacing:0.00px">18/05/2006</div>
<div class="c d" style="left:394.5px;top:101px;width:74px;letter-spacing:0.03px;word-spacing:0.00px">08/02/2012</div>
<div class="c" style="left:473.5px;top:101px;width:170px;letter-spacing:-0.31px;word-spacing:0.00px">Servicio Prevención</div>
<div class="c d" style="left:767.5px;top:101px;width:79px;letter-spacing:0.03px;word-spacing:0.00px">11/03/2010</div>
<div class="c" style="left:951.5px;top:101px;width:49px;letter-spacing:-0.42px;word-spacing:0.00px">SI</div>
<div class="c d" style="left:1005.5px;top:101px;width:74px;letter-spacing:0.03px;word-spacing:0.00px">09/12/2011</div>
<div class="c d" style="left:1084.5px;top:101px;width:81px;letter-spacing:0.03px;word-spacing:0.00px">31/01/2012</div>
<div class="c" style="left:1170.5px;top:101px;width:33px;letter-spacing:-0.42px;word-spacing:0.00px">SI</div>
<div class="abs" style="left:0;top:123px;width:1204px;height:1px;background:#F1EFE2"></div>
<div class="c id" style="left:3px;top:112px;width:57px;letter-spacing:-0.56px;word-spacing:0.00px">AROM03</div>
<div class="c eq" style="left:66.5px;top:112px;width:186px;letter-spacing:-0.27px;word-spacing:0.00px">Linea Impresion</div>
<div class="c" style="left:257.5px;top:112px;width:60px;letter-spacing:-0.85px;word-spacing:0.00px">ABXXS</div>
<div class="c d" style="left:322.5px;top:112px;width:67px;letter-spacing:0.03px;word-spacing:0.00px">15/05/2009</div>
<div class="c d" style="left:394.5px;top:112px;width:74px;letter-spacing:0.03px;word-spacing:0.00px">31/05/2012</div>
<div class="c" style="left:473.5px;top:112px;width:170px;letter-spacing:-0.31px;word-spacing:0.00px">Servicio Prevención</div>
<div class="c" style="left:648.5px;top:112px;width:59px;letter-spacing:-0.73px;word-spacing:0.00px">IMPRESS</div>
<div class="c d" style="left:767.5px;top:112px;width:79px;letter-spacing:0.03px;word-spacing:0.00px">01/01/2012</div>
<div class="c d" style="left:851.5px;top:112px;width:95px;letter-spacing:0.03px;word-spacing:0.00px">28/02/2013</div>
<div class="c" style="left:951.5px;top:112px;width:49px;letter-spacing:-0.42px;word-spacing:0.00px">SI</div>
<div class="c d" style="left:1005.5px;top:112px;width:74px;letter-spacing:0.03px;word-spacing:0.00px">09/02/2012</div>
<div class="c d" style="left:1084.5px;top:112px;width:81px;letter-spacing:0.03px;word-spacing:0.00px">09/02/2012</div>
<div class="c" style="left:1170.5px;top:112px;width:33px;letter-spacing:-0.42px;word-spacing:0.00px">SI</div>
<div class="abs" style="left:0;top:135px;width:1204px;height:1px;background:#F1EFE2"></div>
<div class="c id" style="left:3px;top:124px;width:57px;letter-spacing:-0.56px;word-spacing:0.00px">AROM04</div>
<div class="c eq" style="left:66.5px;top:124px;width:186px;letter-spacing:-0.34px;word-spacing:0.00px">Equipo Vision Control</div>
<div class="c" style="left:257.5px;top:124px;width:60px;letter-spacing:0.03px;word-spacing:0.00px">011</div>
<div class="c d" style="left:322.5px;top:124px;width:67px;letter-spacing:0.03px;word-spacing:0.00px">09/12/2011</div>
<div class="c d" style="left:394.5px;top:124px;width:74px;letter-spacing:0.03px;word-spacing:0.00px">25/09/2012</div>
<div class="c" style="left:473.5px;top:124px;width:170px;letter-spacing:-0.31px;word-spacing:0.00px">Servicio Prevención</div>
<div class="c d" style="left:767.5px;top:124px;width:79px;letter-spacing:0.03px;word-spacing:0.00px">19/03/2009</div>
<div class="c d" style="left:851.5px;top:124px;width:95px;letter-spacing:0.03px;word-spacing:0.00px">31/03/2012</div>
<div class="c" style="left:951.5px;top:124px;width:49px;letter-spacing:-0.42px;word-spacing:0.00px">SI</div>
<div class="c" style="left:1170.5px;top:124px;width:33px;letter-spacing:-0.42px;word-spacing:0.00px">SI</div>
<div class="abs" style="left:0;top:147px;width:1204px;height:1px;background:#F1EFE2"></div>
<div class="c id" style="left:3px;top:136px;width:57px;letter-spacing:-0.56px;word-spacing:0.00px">AROM05</div>
<div class="c eq" style="left:66.5px;top:136px;width:186px;letter-spacing:-0.38px;word-spacing:0.00px">Carretilla elevadora MITSUBISHI</div>
<div class="c" style="left:257.5px;top:136px;width:60px;letter-spacing:-0.73px;word-spacing:0.00px">FC-VC</div>
<div class="c d" style="left:322.5px;top:136px;width:67px;letter-spacing:0.03px;word-spacing:0.00px">28/02/2009</div>
<div class="c d" style="left:394.5px;top:136px;width:74px;letter-spacing:0.03px;word-spacing:0.00px">25/02/2012</div>
<div class="c" style="left:473.5px;top:136px;width:170px;letter-spacing:-0.85px;word-spacing:0.00px">CENTROMEN</div>
<div class="c" style="left:648.5px;top:136px;width:59px;letter-spacing:-0.59px;word-spacing:0.00px">MITSUBISHI</div>
<div class="c" style="left:712.5px;top:136px;width:50px;letter-spacing:-0.45px;word-spacing:0.00px">FEBA-500</div>
<div class="c d" style="left:767.5px;top:136px;width:79px;letter-spacing:0.03px;word-spacing:0.00px">30/10/2008</div>
<div class="c" style="left:951.5px;top:136px;width:49px;letter-spacing:-0.42px;word-spacing:0.00px">SI</div>
<div class="c" style="left:1170.5px;top:136px;width:33px;letter-spacing:-0.42px;word-spacing:0.00px">SI</div>
<div class="abs" style="left:0;top:159px;width:1204px;height:1px;background:#F1EFE2"></div>
<div class="c id" style="left:3px;top:148px;width:57px;letter-spacing:-0.56px;word-spacing:0.00px">AROM06</div>
<div class="c eq" style="left:66.5px;top:148px;width:186px;letter-spacing:-0.30px;word-spacing:0.00px">Envasadora A10</div>
<div class="c" style="left:257.5px;top:148px;width:60px;letter-spacing:-0.26px;word-spacing:0.00px">A10</div>
<div class="c d" style="left:322.5px;top:148px;width:67px;letter-spacing:0.03px;word-spacing:0.00px">31/01/2011</div>
<div class="c d" style="left:394.5px;top:148px;width:74px;letter-spacing:0.03px;word-spacing:0.00px">16/06/2012</div>
<div class="c" style="left:473.5px;top:148px;width:170px;letter-spacing:-0.31px;word-spacing:0.00px">Servicio Prevención</div>
<div class="c" style="left:648.5px;top:148px;width:59px;letter-spacing:-0.37px;word-spacing:0.00px">Envax</div>
<div class="c" style="left:712.5px;top:148px;width:50px;letter-spacing:-0.36px;word-spacing:0.00px">E-1</div>
<div class="c d" style="left:767.5px;top:148px;width:79px;letter-spacing:0.03px;word-spacing:0.00px">11/03/2010</div>
<div class="c" style="left:951.5px;top:148px;width:49px;letter-spacing:-0.42px;word-spacing:0.00px">SI</div>
<div class="c" style="left:1170.5px;top:148px;width:33px;letter-spacing:-0.42px;word-spacing:0.00px">SI</div>
<div class="abs" style="left:0;top:171px;width:1204px;height:1px;background:#F1EFE2"></div>
<div class="c id" style="left:3px;top:160px;width:57px;letter-spacing:-0.56px;word-spacing:0.00px">AROM07</div>
<div class="c eq" style="left:66.5px;top:160px;width:186px;letter-spacing:-0.30px;word-spacing:0.00px">Envasadora A20</div>
<div class="c" style="left:257.5px;top:160px;width:60px;letter-spacing:-0.26px;word-spacing:0.00px">A20</div>
<div class="c d" style="left:322.5px;top:160px;width:67px;letter-spacing:0.03px;word-spacing:0.00px">31/01/2011</div>
<div class="c d" style="left:394.5px;top:160px;width:74px;letter-spacing:0.03px;word-spacing:0.00px">16/06/2012</div>
<div class="c" style="left:473.5px;top:160px;width:170px;letter-spacing:-0.31px;word-spacing:0.00px">Servicio Prevención</div>
<div class="c" style="left:648.5px;top:160px;width:59px;letter-spacing:-0.37px;word-spacing:0.00px">Envax</div>
<div class="c" style="left:712.5px;top:160px;width:50px;letter-spacing:-0.36px;word-spacing:0.00px">E-1</div>
<div class="c d" style="left:767.5px;top:160px;width:79px;letter-spacing:0.03px;word-spacing:0.00px">11/03/2010</div>
<div class="c" style="left:951.5px;top:160px;width:49px;letter-spacing:-0.42px;word-spacing:0.00px">SI</div>
<div class="c" style="left:1170.5px;top:160px;width:33px;letter-spacing:-0.42px;word-spacing:0.00px">SI</div>
<div class="abs" style="left:0;top:183px;width:1204px;height:1px;background:#F1EFE2"></div>
<div class="c id" style="left:3px;top:172px;width:57px;letter-spacing:-0.56px;word-spacing:0.00px">AROM08</div>
<div class="c eq" style="left:66.5px;top:172px;width:186px;letter-spacing:-0.30px;word-spacing:0.00px">Precintadora</div>
<div class="c" style="left:257.5px;top:172px;width:60px;letter-spacing:0.03px;word-spacing:0.00px">0430242</div>
<div class="c d" style="left:322.5px;top:172px;width:67px;letter-spacing:0.03px;word-spacing:0.00px">18/05/2009</div>
<div class="c d" style="left:394.5px;top:172px;width:74px;letter-spacing:0.03px;word-spacing:0.00px">31/05/2012</div>
<div class="c" style="left:473.5px;top:172px;width:170px;letter-spacing:-0.31px;word-spacing:0.00px">Servicio Prevención</div>
<div class="c" style="left:648.5px;top:172px;width:59px;letter-spacing:-0.85px;word-spacing:0.00px">XXXX</div>
<div class="c" style="left:712.5px;top:172px;width:50px;letter-spacing:-0.16px;word-spacing:0.00px">P-1000</div>
<div class="c d" style="left:767.5px;top:172px;width:79px;letter-spacing:0.03px;word-spacing:0.00px">18/09/2003</div>
<div class="c" style="left:951.5px;top:172px;width:49px;letter-spacing:-0.42px;word-spacing:0.00px">SI</div>
<div class="c" style="left:1170.5px;top:172px;width:33px;letter-spacing:-0.42px;word-spacing:0.00px">SI</div>
<div class="abs" style="left:0;top:195px;width:1204px;height:1px;background:#F1EFE2"></div>
<div class="c id" style="left:3px;top:184px;width:57px;letter-spacing:-0.56px;word-spacing:0.00px">AROM09</div>
<div class="c eq" style="left:66.5px;top:184px;width:186px;letter-spacing:-0.28px;word-spacing:0.00px">Impresora XD10</div>
<div class="c" style="left:257.5px;top:184px;width:60px;letter-spacing:0.03px;word-spacing:0.00px">10001</div>
<div class="c d" style="left:322.5px;top:184px;width:67px;letter-spacing:0.03px;word-spacing:0.00px">15/02/2012</div>
<div class="c d" style="left:394.5px;top:184px;width:74px;letter-spacing:0.03px;word-spacing:0.00px">28/02/2013</div>
<div class="c" style="left:473.5px;top:184px;width:170px;letter-spacing:-0.31px;word-spacing:0.00px">Servicio Prevención</div>
<div class="c" style="left:648.5px;top:184px;width:59px;letter-spacing:-0.85px;word-spacing:0.00px">XD</div>
<div class="c" style="left:712.5px;top:184px;width:50px;letter-spacing:-0.85px;word-spacing:0.00px">XD</div>
<div class="c d" style="left:767.5px;top:184px;width:79px;letter-spacing:0.03px;word-spacing:0.00px">18/06/2008</div>
<div class="c d" style="left:851.5px;top:184px;width:95px;letter-spacing:0.03px;word-spacing:0.00px">08/02/2007</div>
<div class="c" style="left:951.5px;top:184px;width:49px;letter-spacing:-0.42px;word-spacing:0.00px">SI</div>
<div class="c" style="left:1170.5px;top:184px;width:33px;letter-spacing:-0.42px;word-spacing:0.00px">SI</div>
<div class="abs" style="left:0;top:207px;width:1204px;height:1px;background:#F1EFE2"></div>
<div class="c id" style="left:3px;top:196px;width:57px;letter-spacing:-0.56px;word-spacing:0.00px">AROM10</div>
<div class="c eq" style="left:66.5px;top:196px;width:186px;letter-spacing:-0.28px;word-spacing:0.00px">Impresora XD20</div>
<div class="c" style="left:257.5px;top:196px;width:60px;letter-spacing:0.03px;word-spacing:0.00px">20001</div>
<div class="c d" style="left:322.5px;top:196px;width:67px;letter-spacing:0.03px;word-spacing:0.00px">15/02/2012</div>
<div class="c d" style="left:394.5px;top:196px;width:74px;letter-spacing:0.03px;word-spacing:0.00px">28/02/2013</div>
<div class="c" style="left:473.5px;top:196px;width:170px;letter-spacing:-0.31px;word-spacing:0.00px">Servicio Prevención</div>
<div class="c" style="left:648.5px;top:196px;width:59px;letter-spacing:-0.85px;word-spacing:0.00px">XD</div>
<div class="c" style="left:712.5px;top:196px;width:50px;letter-spacing:-0.85px;word-spacing:0.00px">XD</div>
<div class="c d" style="left:767.5px;top:196px;width:79px;letter-spacing:0.03px;word-spacing:0.00px">18/06/2008</div>
<div class="c d" style="left:851.5px;top:196px;width:95px;letter-spacing:0.03px;word-spacing:0.00px">08/02/2007</div>
<div class="c" style="left:951.5px;top:196px;width:49px;letter-spacing:-0.42px;word-spacing:0.00px">SI</div>
<div class="c" style="left:1170.5px;top:196px;width:33px;letter-spacing:-0.42px;word-spacing:0.00px">SI</div>
<div class="abs" style="left:0;top:219px;width:1204px;height:1px;background:#F1EFE2"></div>
<div class="c id" style="left:3px;top:208px;width:57px;letter-spacing:-0.56px;word-spacing:0.00px">AROM11</div>
<div class="c eq" style="left:66.5px;top:208px;width:186px;letter-spacing:-0.32px;word-spacing:0.00px">Reconfigurador Grafico A</div>
<div class="c" style="left:257.5px;top:208px;width:60px;letter-spacing:0.03px;word-spacing:0.00px">345</div>
<div class="c d" style="left:322.5px;top:208px;width:67px;letter-spacing:0.03px;word-spacing:0.00px">23/06/2010</div>
<div class="c d" style="left:394.5px;top:208px;width:74px;letter-spacing:0.03px;word-spacing:0.00px">30/06/2012</div>
<div class="c" style="left:473.5px;top:208px;width:170px;letter-spacing:-0.31px;word-spacing:0.00px">Servicio Prevención</div>
<div class="c" style="left:648.5px;top:208px;width:59px;letter-spacing:-0.26px;word-spacing:0.00px">RG 1000</div>
<div class="c" style="left:712.5px;top:208px;width:50px;letter-spacing:-0.85px;word-spacing:0.00px">RG</div>
<div class="c d" style="left:767.5px;top:208px;width:79px;letter-spacing:0.03px;word-spacing:0.00px">23/06/2010</div>
<div class="c d" style="left:851.5px;top:208px;width:95px;letter-spacing:0.03px;word-spacing:0.00px">23/06/2010</div>
<div class="c" style="left:951.5px;top:208px;width:49px;letter-spacing:-0.42px;word-spacing:0.00px">SI</div>
<div class="c" style="left:1170.5px;top:208px;width:33px;letter-spacing:-0.42px;word-spacing:0.00px">SI</div>
<div class="abs" style="left:0;top:231px;width:1204px;height:1px;background:#F1EFE2"></div>
<div class="c id" style="left:3px;top:220px;width:57px;letter-spacing:-0.56px;word-spacing:0.00px">AROM12</div>
<div class="c eq" style="left:66.5px;top:220px;width:186px;letter-spacing:-0.32px;word-spacing:0.00px">Reconfigurador Grafico B</div>
<div class="c" style="left:257.5px;top:220px;width:60px;letter-spacing:0.03px;word-spacing:0.00px">346</div>
<div class="c d" style="left:322.5px;top:220px;width:67px;letter-spacing:0.03px;word-spacing:0.00px">23/06/2010</div>
<div class="c d" style="left:394.5px;top:220px;width:74px;letter-spacing:0.03px;word-spacing:0.00px">30/06/2012</div>
<div class="c" style="left:473.5px;top:220px;width:170px;letter-spacing:-0.31px;word-spacing:0.00px">Servicio Prevención</div>
<div class="c" style="left:648.5px;top:220px;width:59px;letter-spacing:-0.26px;word-spacing:0.00px">RG 1000</div>
<div class="c" style="left:712.5px;top:220px;width:50px;letter-spacing:-0.85px;word-spacing:0.00px">RG</div>
<div class="c d" style="left:767.5px;top:220px;width:79px;letter-spacing:0.03px;word-spacing:0.00px">23/06/2010</div>
<div class="c d" style="left:851.5px;top:220px;width:95px;letter-spacing:0.03px;word-spacing:0.00px">23/06/2010</div>
<div class="c" style="left:951.5px;top:220px;width:49px;letter-spacing:-0.42px;word-spacing:0.00px">SI</div>
<div class="c" style="left:1170.5px;top:220px;width:33px;letter-spacing:-0.42px;word-spacing:0.00px">SI</div>
<div class="abs" style="left:0;top:243px;width:1204px;height:1px;background:#F1EFE2"></div>
<div class="c id" style="left:3px;top:232px;width:57px;letter-spacing:-0.56px;word-spacing:0.00px">DAJU01</div>
<div class="c eq" style="left:66.5px;top:232px;width:186px;letter-spacing:-0.31px;word-spacing:0.00px">Ensambladora RER 1316</div>
<div class="c" style="left:257.5px;top:232px;width:60px;letter-spacing:0.03px;word-spacing:0.00px">1225</div>
<div class="c d" style="left:322.5px;top:232px;width:67px;letter-spacing:0.03px;word-spacing:0.00px">31/05/2010</div>
<div class="c d" style="left:394.5px;top:232px;width:74px;letter-spacing:0.03px;word-spacing:0.00px">30/05/2011</div>
<div class="c" style="left:473.5px;top:232px;width:170px;letter-spacing:-0.31px;word-spacing:0.00px">Servicio Prevención</div>
<div class="c" style="left:648.5px;top:232px;width:59px;letter-spacing:-0.85px;word-spacing:0.00px">EXAM</div>
<div class="c d" style="left:767.5px;top:232px;width:79px;letter-spacing:0.03px;word-spacing:0.00px">11/03/2010</div>
<div class="c" style="left:951.5px;top:232px;width:49px;letter-spacing:-0.42px;word-spacing:0.00px">SI</div>
<div class="c" style="left:1170.5px;top:232px;width:33px;letter-spacing:-0.42px;word-spacing:0.00px">SI</div>
<div class="abs" style="left:0;top:255px;width:1204px;height:1px;background:#F1EFE2"></div>
<div class="c id" style="left:3px;top:244px;width:57px;letter-spacing:-0.56px;word-spacing:0.00px">DAJU02</div>
<div class="c eq" style="left:66.5px;top:244px;width:186px;letter-spacing:-0.31px;word-spacing:0.00px">Ensambladora RER 1317</div>
<div class="c" style="left:257.5px;top:244px;width:60px;letter-spacing:0.03px;word-spacing:0.00px">1224</div>
<div class="c d" style="left:322.5px;top:244px;width:67px;letter-spacing:0.03px;word-spacing:0.00px">30/05/2008</div>
<div class="c d" style="left:394.5px;top:244px;width:74px;letter-spacing:0.03px;word-spacing:0.00px">30/07/2011</div>
<div class="c" style="left:473.5px;top:244px;width:170px;letter-spacing:-0.31px;word-spacing:0.00px">Servicio Prevención</div>
<div class="c" style="left:648.5px;top:244px;width:59px;letter-spacing:-0.85px;word-spacing:0.00px">EXAM</div>
<div class="c d" style="left:767.5px;top:244px;width:79px;letter-spacing:0.03px;word-spacing:0.00px">11/03/2010</div>
<div class="c" style="left:951.5px;top:244px;width:49px;letter-spacing:-0.42px;word-spacing:0.00px">SI</div>
<div class="c" style="left:1170.5px;top:244px;width:33px;letter-spacing:-0.42px;word-spacing:0.00px">SI</div>
<div class="abs" style="left:0;top:267px;width:1204px;height:1px;background:#F1EFE2"></div>
<div class="c id" style="left:3px;top:256px;width:57px;letter-spacing:-0.56px;word-spacing:0.00px">DAJU03</div>
<div class="c eq" style="left:66.5px;top:256px;width:186px;letter-spacing:-0.35px;word-spacing:0.00px">Ensambladora PET 13</div>
<div class="c" style="left:257.5px;top:256px;width:60px;letter-spacing:0.03px;word-spacing:0.00px">1101</div>
<div class="c d" style="left:322.5px;top:256px;width:67px;letter-spacing:0.03px;word-spacing:0.00px">30/01/2008</div>
<div class="c d" style="left:394.5px;top:256px;width:74px;letter-spacing:0.03px;word-spacing:0.00px">30/12/2011</div>
<div class="c" style="left:473.5px;top:256px;width:170px;letter-spacing:-0.31px;word-spacing:0.00px">Servicio Prevención</div>
<div class="c" style="left:648.5px;top:256px;width:59px;letter-spacing:-0.85px;word-spacing:0.00px">EXAM</div>
<div class="c d" style="left:767.5px;top:256px;width:79px;letter-spacing:0.03px;word-spacing:0.00px">11/03/2010</div>
<div class="c" style="left:951.5px;top:256px;width:49px;letter-spacing:-0.42px;word-spacing:0.00px">SI</div>
<div class="c d" style="left:1005.5px;top:256px;width:74px;letter-spacing:0.03px;word-spacing:0.00px">20/12/2011</div>
<div class="c d" style="left:1084.5px;top:256px;width:81px;letter-spacing:0.03px;word-spacing:0.00px">31/12/2013</div>
<div class="c" style="left:1170.5px;top:256px;width:33px;letter-spacing:-0.42px;word-spacing:0.00px">SI</div>
<div class="abs" style="left:0;top:278px;width:1204px;height:1px;background:#F1EFE2"></div>
<div class="c id" style="left:3px;top:268px;width:57px;letter-spacing:-0.56px;word-spacing:0.00px">DAJU04</div>
<div class="c eq" style="left:66.5px;top:268px;width:186px;letter-spacing:-0.35px;word-spacing:0.00px">Ensambladora PET 14</div>
<div class="c" style="left:257.5px;top:268px;width:60px;letter-spacing:0.03px;word-spacing:0.00px">1102</div>
<div class="c d" style="left:322.5px;top:268px;width:67px;letter-spacing:0.03px;word-spacing:0.00px">30/04/2008</div>
<div class="c d" style="left:394.5px;top:268px;width:74px;letter-spacing:0.03px;word-spacing:0.00px">30/10/2011</div>
<div class="c" style="left:473.5px;top:268px;width:170px;letter-spacing:-0.31px;word-spacing:0.00px">Servicio Prevención</div>
<div class="c" style="left:648.5px;top:268px;width:59px;letter-spacing:-0.85px;word-spacing:0.00px">EXAM</div>
<div class="c d" style="left:767.5px;top:268px;width:79px;letter-spacing:0.03px;word-spacing:0.00px">11/03/2010</div>
<div class="c" style="left:951.5px;top:268px;width:49px;letter-spacing:-0.42px;word-spacing:0.00px">SI</div>
<div class="c" style="left:1170.5px;top:268px;width:33px;letter-spacing:-0.42px;word-spacing:0.00px">SI</div>
<div class="abs" style="left:0;top:290px;width:1204px;height:1px;background:#F1EFE2"></div>
<div class="c id" style="left:3px;top:279px;width:57px;letter-spacing:-0.56px;word-spacing:0.00px">DAJU05</div>
<div class="c eq" style="left:66.5px;top:279px;width:186px;letter-spacing:-0.42px;word-spacing:0.00px">Tolva A</div>
<div class="c" style="left:257.5px;top:279px;width:60px;letter-spacing:-0.65px;word-spacing:0.00px">T-W</div>
<div class="c d" style="left:322.5px;top:279px;width:67px;letter-spacing:0.03px;word-spacing:0.00px">31/01/2007</div>
<div class="c d" style="left:394.5px;top:279px;width:74px;letter-spacing:0.03px;word-spacing:0.00px">31/12/2010</div>
<div class="c" style="left:473.5px;top:279px;width:170px;letter-spacing:-0.31px;word-spacing:0.00px">Servicio Prevención</div>
<div class="c d" style="left:767.5px;top:279px;width:79px;letter-spacing:0.03px;word-spacing:0.00px">11/03/2010</div>
<div class="c" style="left:951.5px;top:279px;width:49px;letter-spacing:-0.42px;word-spacing:0.00px">SI</div>
<div class="c" style="left:1170.5px;top:279px;width:33px;letter-spacing:-0.42px;word-spacing:0.00px">SI</div>
<div class="abs" style="left:0;top:302px;width:1204px;height:1px;background:#F1EFE2"></div>
<div class="c id" style="left:3px;top:291px;width:57px;letter-spacing:-0.56px;word-spacing:0.00px">DAJU07</div>
<div class="c eq" style="left:66.5px;top:291px;width:186px;letter-spacing:-0.42px;word-spacing:0.00px">Envasadora RFD</div>
<div class="c" style="left:257.5px;top:291px;width:60px;letter-spacing:-0.12px;word-spacing:0.00px">A12453</div>
<div class="c d" style="left:322.5px;top:291px;width:67px;letter-spacing:0.03px;word-spacing:0.00px">31/01/2011</div>
<div class="c d" style="left:394.5px;top:291px;width:74px;letter-spacing:0.03px;word-spacing:0.00px">16/06/2012</div>
<div class="c" style="left:473.5px;top:291px;width:170px;letter-spacing:-0.31px;word-spacing:0.00px">Servicio Prevención</div>
<div class="c" style="left:648.5px;top:291px;width:59px;letter-spacing:-0.37px;word-spacing:0.00px">Envax</div>
<div class="c" style="left:712.5px;top:291px;width:50px;letter-spacing:-0.36px;word-spacing:0.00px">E-1</div>
<div class="c d" style="left:767.5px;top:291px;width:79px;letter-spacing:0.03px;word-spacing:0.00px">11/03/2010</div>
<div class="c" style="left:951.5px;top:291px;width:49px;letter-spacing:-0.42px;word-spacing:0.00px">SI</div>
<div class="c" style="left:1170.5px;top:291px;width:33px;letter-spacing:-0.42px;word-spacing:0.00px">SI</div>
<div class="abs" style="left:62px;top:17px;width:1px;height:300px;background:#EEEBDD;opacity:.9"></div>
<div class="abs" style="left:253px;top:17px;width:1px;height:300px;background:#EEEBDD;opacity:.9"></div>
<div class="abs" style="left:318px;top:17px;width:1px;height:300px;background:#EEEBDD;opacity:.9"></div>
<div class="abs" style="left:390px;top:17px;width:1px;height:300px;background:#EEEBDD;opacity:.9"></div>
<div class="abs" style="left:469px;top:17px;width:1px;height:300px;background:#EEEBDD;opacity:.9"></div>
<div class="abs" style="left:644px;top:17px;width:1px;height:300px;background:#EEEBDD;opacity:.9"></div>
<div class="abs" style="left:708px;top:17px;width:1px;height:300px;background:#EEEBDD;opacity:.9"></div>
<div class="abs" style="left:763px;top:17px;width:1px;height:300px;background:#EEEBDD;opacity:.9"></div>
<div class="abs" style="left:847px;top:17px;width:1px;height:300px;background:#EEEBDD;opacity:.9"></div>
<div class="abs" style="left:947px;top:17px;width:1px;height:300px;background:#EEEBDD;opacity:.9"></div>
<div class="abs" style="left:1001px;top:17px;width:1px;height:300px;background:#EEEBDD;opacity:.9"></div>
<div class="abs" style="left:1080px;top:17px;width:1px;height:300px;background:#EEEBDD;opacity:.9"></div>
<div class="abs" style="left:1166px;top:17px;width:1px;height:300px;background:#EEEBDD;opacity:.9"></div>
<div class="abs" style="left:1204px;top:17px;width:1px;height:300px;background:#F1EFE2"></div>
</div>
<!-- vscroll 1 -->
<div class="track" style="left:1211px;top:137px;width:13px;height:300px;background:linear-gradient(to right,#F3F1EA,#FCFCF9)"></div>
<div class="sbtn" style="left:1211px;top:138px"><svg class="abs" style="left:2.5px;top:3.5px" width="8" height="6" viewBox="0 0 8 6"><path d="M0.8 4.6 L4 1.4 L7.2 4.6" fill="none" stroke="#4D6185" stroke-width="1.7"/></svg></div>
<div class="vthumb" style="left:1211px;top:154px;height:92px"><div class="abs" style="left:4px;top:42px;width:5px;height:7px;background:repeating-linear-gradient(to bottom,#EEF4FE 0,#EEF4FE 1px,#A9BEEE 1px,#A9BEEE 2px)"></div></div>
<div class="sbtn" style="left:1211px;top:420px"><svg class="abs" style="left:2.5px;top:3.5px" width="8" height="6" viewBox="0 0 8 6"><path d="M0.8 1.4 L4 4.6 L7.2 1.4" fill="none" stroke="#4D6185" stroke-width="1.7"/></svg></div>
<!-- hscroll 1 -->
<div class="track" style="left:5px;top:436px;width:1206px;height:15px;background:linear-gradient(to bottom,#F3F1EA,#FCFCF9)"></div>
<div class="abs" style="left:1210px;top:436px;width:14px;height:15px;background:#ECE9D8"></div>
<div class="sbtn" style="left:6px;top:437px"><svg class="abs" style="left:2.8px;top:2.5px" width="6" height="8" viewBox="0 0 6 8"><path d="M4.6 0.8 L1.4 4 L4.6 7.2" fill="none" stroke="#4D6185" stroke-width="1.7"/></svg></div>
<div class="hthumb" style="left:22px;top:437px;width:1150px"><div class="abs" style="left:574px;top:4px;width:7px;height:5px;background:repeating-linear-gradient(to right,#EEF4FE 0,#EEF4FE 1px,#A9BEEE 1px,#A9BEEE 2px)"></div></div>
<div class="sbtn" style="left:1194px;top:437px"><svg class="abs" style="left:3.5px;top:2.5px" width="6" height="8" viewBox="0 0 6 8"><path d="M1.4 0.8 L4.6 4 L1.4 7.2" fill="none" stroke="#4D6185" stroke-width="1.7"/></svg></div>
<!-- splitter -->
<div class="abs" style="left:2px;top:451px;width:1224px;height:4px;background:linear-gradient(to bottom,#F4F2E8,#EFEDE0)"></div>
<div class="abs" style="left:1px;top:455px;width:1223px;height:3px;background:linear-gradient(to bottom,#A29F90 0,#8D8A7B 1px,#8D8A7B 2px,#B0AD9F 3px)"></div>
<style>
.tab{position:absolute;top:479px;height:16px;border:1px solid #9DB2C6;border-bottom:none;border-radius:3px 3px 0 0;background:linear-gradient(to bottom,#FFFFFF 0,#FBFBF8 60%,#F3F2EA 100%)}
.tab b,.tabact b{position:absolute;font-size:10.4px;line-height:13px;white-space:pre;letter-spacing:-0.2px}
.tabact{position:absolute;left:208px;top:477px;width:134px;height:19px;background:#FEFEFE;border:1px solid #91A7B4;border-bottom:none;border-top:none;border-radius:3px 3px 0 0}
.btn{position:absolute;top:719px;height:18px;border:1px solid #3F5F8D;border-radius:3px;background:linear-gradient(to bottom,#FFFFFF 0,#F7F6F2 50%,#ECEBE5 85%,#E3D9C4 100%);box-shadow:inset 0 0 0 1px #E9EEF6}
.btn span{position:absolute;top:3px;font-size:9.5px;letter-spacing:-0.2px;line-height:11px;white-space:pre}
.sp{position:absolute;top:748px;height:18px;border-top:1px solid #A5A293;border-left:1px solid #A5A293;border-right:1px solid #fff;border-bottom:1px solid #fff;background:#ECE9D8}
.sp span{position:absolute;top:3px;font-size:10.6px;line-height:13px;white-space:pre;letter-spacing:-0.25px;transform:scaleX(.9);transform-origin:0 0}
</style>
<!-- bottom panel -->
<svg class="abs" style="left:0;top:459px" width="100" height="18" viewBox="0 459 100 18">
<svg x="7.4" y="460.9" width="13.9" height="13.9" viewBox="0 0 14 14"><rect x="0.9" y="0.9" width="12.2" height="12.2" fill="#fff" stroke="#157015" stroke-width="1.8"/><path d="M2.4 2.8 L5.4 2.8 L11.6 9.8 L8.6 9.8 Z" fill="#157015"/><path d="M11.4 2.8 L8.6 2.8 L2.6 9.8 L5.4 9.8 Z" fill="#1E8A1E"/><rect x="1.5" y="10.6" width="11" height="1.2" fill="#fff"/></svg>
<svg x="27" y="460.6" width="14" height="14" viewBox="0 0 14 14"><path d="M3.4 0.6 L10.6 0.6 L13.4 3.4 L13.4 13.4 L3.4 13.4 Z" fill="#F4F3EE" stroke="#555" stroke-width="1"/><path d="M10.6 0.6 L10.6 3.4 L13.4 3.4" fill="none" stroke="#555" stroke-width="0.8"/><rect x="0.4" y="1.6" width="7.2" height="6.8" rx="1" fill="#7DB07D"/><rect x="2.2" y="3.2" width="3.6" height="3.6" fill="#A6CFA6"/><rect x="9.4" y="9.4" width="2.6" height="2.4" fill="#444"/></svg>
<svg x="47.2" y="460.6" width="14" height="14" viewBox="0 0 14 14"><rect x="0" y="0" width="4" height="14" fill="#fff"/><path d="M3.4 0.6 L10.6 0.6 L13.4 3.4 L13.4 13.4 L3.4 13.4 Z" fill="#F4F3EE" stroke="#666" stroke-width="1.1"/><path d="M10.6 0.6 L10.6 3.4 L13.4 3.4" fill="none" stroke="#666" stroke-width="0.8"/><circle cx="4.8" cy="6.6" r="3.2" fill="none" stroke="#2A66E4" stroke-width="2"/><rect x="3" y="6" width="5.6" height="1.3" fill="#2A66E4"/><rect x="6" y="7.4" width="3" height="1.6" fill="#F4F3EE"/><path d="M0.6 9.6 Q4 7 9 2.6" fill="none" stroke="#E8B020" stroke-width="1.1"/></svg>
<rect x="66.4" y="460.5" width="1.4" height="15" fill="#BDBAAB"/>
<svg x="72.8" y="460.8" width="14.6" height="13.8" viewBox="0 0 15 14"><path d="M3.2 6.6 L2 1 L7.4 0.4 L9.6 5.8 Z" fill="#BCD8FA" stroke="#86AEE6" stroke-width="0.8"/><path d="M0.8 8 L3.4 5.6 L10.6 5.2 L14.2 7.2 L14.2 10.4 L5.4 13.4 L0.8 11.2 Z" fill="url(#prbody2)" stroke="#8A8A8A" stroke-width="0.7"/><path d="M5.6 10.2 L12.6 8.2 L12.6 9.2 L5.6 11.4 Z" fill="#333"/><path d="M0.8 8 L5.4 10 L14.2 7.2" fill="none" stroke="#fff" stroke-width="0.7"/></svg>
</svg>

<!-- tab page -->
<div class="abs" style="left:5px;top:495px;width:1219px;height:249px;background:#FEFEFE;border-top:1px solid #919B9C;border-right:1px solid #EDEBE0"></div>
<div class="abs" style="left:1224px;top:458px;width:4px;height:286px;background:#FAFAF6"></div>
<div class="abs" style="left:5px;top:744px;width:1223px;height:2px;background:#F7F6F0"></div>
<div class="tab" style="left:7px;width:55px"><svg class="abs" style="left:4px;top:2px" width="15" height="12" viewBox="0 0 15 12"><rect x="0.5" y="0.5" width="14" height="11" fill="#fff" stroke="#A6A6A6" stroke-width="1"/><rect x="2" y="2.4" width="11" height="1.2" fill="#8FE08F"/><rect x="2" y="4.4" width="11" height="1.2" fill="#A9E8A9"/><rect x="2" y="6.4" width="11" height="1.2" fill="#8FE08F"/><rect x="1" y="9" width="13" height="2" fill="#C9C9C9"/><rect x="5" y="9.6" width="1.2" height="1.2" fill="#444"/><rect x="8.6" y="9.6" width="1.2" height="1.2" fill="#444"/></svg><b style="left:23px;top:2px">Ficha</b></div>
<div class="tab" style="left:64px;width:77px"><svg class="abs" style="left:4px;top:0px" width="15" height="15" viewBox="0 0 15 15"><rect x="6.4" y="0.8" width="4" height="1.6" rx="0.6" fill="#188A2A"/><rect x="0.6" y="3.6" width="13.6" height="2.6" rx="0.8" fill="#B8B8B8" stroke="#6E6E6E" stroke-width="0.7"/><rect x="1.6" y="6" width="1.6" height="8.4" fill="#5A5A5A"/><rect x="9.4" y="2.6" width="3.8" height="11.8" fill="#D8D8CC" stroke="#555" stroke-width="0.8"/><rect x="10.8" y="4" width="1" height="1" fill="#C8B820"/><rect x="10.8" y="8" width="1" height="1" fill="#C8B820"/><rect x="10.8" y="11.6" width="1" height="1" fill="#C8B820"/><rect x="9" y="13.4" width="4.6" height="1.2" fill="#222"/></svg><b style="left:23px;top:2px">Ubicación</b></div>
<div class="tab" style="left:142px;width:67px"><svg class="abs" style="left:4px;top:0px" width="15" height="15" viewBox="0 0 15 15"><rect x="0" y="0" width="9" height="7" fill="#ECE9D8"/><path d="M5.4 4.4 L7 1.2 L11.4 3 L12 7.4" fill="none" stroke="#18A0BC" stroke-width="1.9" stroke-linejoin="round"/><path d="M4.6 5.6 L7.6 4.2" stroke="#E8D020" stroke-width="1.4"/><path d="M2.6 7.6 L12.6 7.6 L13.6 9.6 L13.6 12 L1 12 L1 10 Z" fill="#B8B8B8" stroke="#555" stroke-width="0.8"/><rect x="4" y="9" width="6.6" height="1.5" fill="#E8D838"/><rect x="0.8" y="12.4" width="12.4" height="1.6" rx="0.6" fill="#E8E8E8" stroke="#444" stroke-width="0.8"/></svg><b style="left:23px;top:2px">Puestos</b></div>
<div class="tabact"><div class="abs" style="left:-1px;top:0;width:134px;height:3px;border-radius:3px 3px 0 0;background:linear-gradient(to bottom,#E8902C 0,#F8A830 1px,#FFC848 2px,#FFE6A8 2.6px,#FEFEFE 3px)"></div><svg class="abs" style="left:6px;top:2px" width="15" height="14" viewBox="0 0 15 14"><rect x="0.6" y="0.6" width="13.4" height="12" fill="#ECE9D8"/><path d="M3.2 10.4 L11.6 2" stroke="#111" stroke-width="3.2"/><path d="M6.6 7 L10.4 3.2" stroke="#38D038" stroke-width="1.7"/><path d="M11.4 2.2 L14 0" stroke="#333" stroke-width="0.9"/><path d="M1.4 8 L5.6 12.2" stroke="#111" stroke-width="1.5"/><path d="M0.6 12.6 L3.4 10" stroke="#111" stroke-width="2"/><circle cx="1.8" cy="11.8" r="1.5" fill="#111"/><path d="M7 11.2 L9.4 11.6" stroke="#111" stroke-width="1.2"/></svg><b style="left:25px;top:3px">Medidas Preventivas</b></div>
<!-- grid2 frame -->
<div class="abs" style="left:16px;top:504px;width:1200px;height:211px;border-left:1px solid #85826F;border-top:1px solid #85826F;border-right:1px solid #F1EFE2;border-bottom:1px solid #F1EFE2;background:#fff"></div>
<div id="g2" class="abs" style="left:17px;top:505px;width:1198px;height:194px;overflow:hidden;background:#fff">
<div class="abs" style="left:0;top:0;width:1198px;height:13px;background:#ECE9D8"></div>
<div class="abs" style="left:0;top:13px;width:1198px;height:2px;background:linear-gradient(to bottom,#8F8C7C 0,#8F8C7C 1px,#B9B6A8 2px)"></div>
<div class="hc h2" style="left:0px;width:593px"><span style="letter-spacing:-0.12px">Medida Preventiva</span></div>
<div class="hc h2" style="left:593px;width:49px"><span style="letter-spacing:-0.45px">Realizado</span></div>
<div class="hc h2" style="left:642px;width:104px"><span>Fecha de comunicación</span></div>
<div class="hc h2" style="left:746px;width:109px"><span style="letter-spacing:-0.42px">Fecha Límite Realización</span></div>
<div class="hc h2" style="left:855px;width:80px"><span>Fecha realización</span></div>
<div class="hc h2" style="left:935px;width:140px"><span>Responsable</span></div>
<div class="hc h2" style="left:1075px;width:46px"><span>Prioridad</span></div>
<div class="hc h2" style="left:1121px;width:77px"><span style="letter-spacing:0.02px">Trab. Afectados</span></div>
<div class="abs" style="left:0;top:26px;width:1198px;height:1px;background:#F1EFE2"></div>
<div class="c m" style="left:3px;top:15px;width:589px;letter-spacing:-0.14px;word-spacing:0.00px">Cerrar la parte inferior del equipo por riesgo de accidente por contacto con partes en movimiento</div>
<div class="c" style="left:597.5px;top:15px;width:45px;letter-spacing:-0.85px;word-spacing:0.00px">NO</div>
<div class="c d" style="left:646.5px;top:15px;width:100px;letter-spacing:0.03px;word-spacing:0.00px">23/02/2012</div>
<div class="c d" style="left:750.5px;top:15px;width:105px;letter-spacing:0.03px;word-spacing:0.00px">21/04/2012</div>
<div class="c rs" style="left:939.5px;top:15px;width:136px;letter-spacing:-0.85px;word-spacing:1.06px">ANTONIA LUMBRERAS TORMES</div>
<div class="c" style="left:1079.5px;top:15px;width:42px;letter-spacing:0.03px;word-spacing:0.00px">3</div>
<div class="c" style="left:1125.5px;top:15px;width:73px;letter-spacing:0.03px;word-spacing:0.00px">5</div>
<div class="abs" style="left:0;top:38px;width:1198px;height:1px;background:#F1EFE2"></div>
<div class="c m" style="left:3px;top:27px;width:589px;letter-spacing:-0.13px;word-spacing:0.00px">Colocar chapa resguardo fijo para evitar el acceso a los dos engranajes de trasmisión del cable en el transporte de cilindros a la rueda inclinada.</div>
<div class="c" style="left:597.5px;top:27px;width:45px;letter-spacing:-0.85px;word-spacing:0.00px">NO</div>
<div class="c d" style="left:646.5px;top:27px;width:100px;letter-spacing:0.03px;word-spacing:0.00px">23/02/2012</div>
<div class="c d" style="left:750.5px;top:27px;width:105px;letter-spacing:0.03px;word-spacing:0.00px">21/04/2012</div>
<div class="c rs" style="left:939.5px;top:27px;width:136px;letter-spacing:-0.85px;word-spacing:1.06px">ANTONIA LUMBRERAS TORMES</div>
<div class="c" style="left:1079.5px;top:27px;width:42px;letter-spacing:0.03px;word-spacing:0.00px">2</div>
<div class="c" style="left:1125.5px;top:27px;width:73px;letter-spacing:0.03px;word-spacing:0.00px">10</div>
<div class="abs" style="left:0;top:50px;width:1198px;height:1px;background:#F1EFE2"></div>
<div class="c m" style="left:3px;top:39px;width:589px;letter-spacing:-0.14px;word-spacing:0.00px">Disponer de toma de tierra en el cuadro electrico</div>
<div class="c" style="left:597.5px;top:39px;width:45px;letter-spacing:-0.85px;word-spacing:0.00px">NO</div>
<div class="c d" style="left:646.5px;top:39px;width:100px;letter-spacing:0.03px;word-spacing:0.00px">23/02/2012</div>
<div class="c d" style="left:750.5px;top:39px;width:105px;letter-spacing:0.03px;word-spacing:0.00px">21/04/2012</div>
<div class="c rs" style="left:939.5px;top:39px;width:136px;letter-spacing:-0.85px;word-spacing:1.06px">ANTONIA LUMBRERAS TORMES</div>
<div class="c" style="left:1079.5px;top:39px;width:42px;letter-spacing:0.03px;word-spacing:0.00px">3</div>
<div class="c" style="left:1125.5px;top:39px;width:73px;letter-spacing:0.03px;word-spacing:0.00px">15</div>
<div class="abs" style="left:0;top:62px;width:1198px;height:1px;background:#F1EFE2"></div>
<div class="abs" style="left:0;top:74px;width:1198px;height:1px;background:#F1EFE2"></div>
<div class="abs" style="left:0;top:86px;width:1198px;height:1px;background:#F1EFE2"></div>
<div class="abs" style="left:0;top:97px;width:1198px;height:1px;background:#F1EFE2"></div>
<div class="abs" style="left:0;top:109px;width:1198px;height:1px;background:#F1EFE2"></div>
<div class="abs" style="left:0;top:121px;width:1198px;height:1px;background:#F1EFE2"></div>
<div class="abs" style="left:0;top:133px;width:1198px;height:1px;background:#F1EFE2"></div>
<div class="abs" style="left:0;top:145px;width:1198px;height:1px;background:#F1EFE2"></div>
<div class="abs" style="left:0;top:157px;width:1198px;height:1px;background:#F1EFE2"></div>
<div class="abs" style="left:0;top:169px;width:1198px;height:1px;background:#F1EFE2"></div>
<div class="abs" style="left:0;top:181px;width:1198px;height:1px;background:#F1EFE2"></div>
<div class="abs" style="left:0;top:193px;width:1198px;height:1px;background:#F1EFE2"></div>
<div class="abs" style="left:593px;top:15px;width:1px;height:300px;background:#EEEBDD"></div>
<div class="abs" style="left:642px;top:15px;width:1px;height:300px;background:#EEEBDD"></div>
<div class="abs" style="left:746px;top:15px;width:1px;height:300px;background:#EEEBDD"></div>
<div class="abs" style="left:855px;top:15px;width:1px;height:300px;background:#EEEBDD"></div>
<div class="abs" style="left:935px;top:15px;width:1px;height:300px;background:#EEEBDD"></div>
<div class="abs" style="left:1075px;top:15px;width:1px;height:300px;background:#EEEBDD"></div>
<div class="abs" style="left:1121px;top:15px;width:1px;height:300px;background:#EEEBDD"></div>
</div>
<div class="track" style="left:17px;top:699px;width:1198px;height:14px;background:linear-gradient(to bottom,#F3F1EA,#FCFCF9)"></div>
<div class="sbtn" style="left:18px;top:700px"><svg class="abs" style="left:3.5px;top:2.5px" width="6" height="8" viewBox="0 0 6 8"><path d="M4.6 0.8 L1.4 4 L4.6 7.2" fill="none" stroke="#4D6185" stroke-width="1.7"/></svg></div>
<div class="hthumb" style="left:34px;top:700px;width:1122px"><div class="abs" style="left:558px;top:4px;width:7px;height:5px;background:repeating-linear-gradient(to right,#EEF4FE 0,#EEF4FE 1px,#A9BEEE 1px,#A9BEEE 2px)"></div></div>
<div class="sbtn" style="left:1201px;top:700px"><svg class="abs" style="left:3.5px;top:2.5px" width="6" height="8" viewBox="0 0 6 8"><path d="M1.4 0.8 L4.6 4 L1.4 7.2" fill="none" stroke="#4D6185" stroke-width="1.7"/></svg></div>
<!-- buttons -->
<div class="btn" style="left:744px;width:95px"><svg class="abs" style="left:5px;top:1px" width="14" height="14" viewBox="0 0 14 14"><circle cx="7" cy="7" r="6.1" fill="#9AD890"/><circle cx="7" cy="7" r="5.1" fill="#62B856"/><path d="M7 3.8 L7 10.2 M3.8 7 L10.2 7" stroke="#fff" stroke-width="2"/></svg><span style="left:39px">Alta</span></div>
<div class="btn" style="left:840px;width:95px"><svg class="abs" style="left:5px;top:1px" width="14" height="14" viewBox="0 0 14 14"><circle cx="7" cy="7" r="6.1" fill="#F09890"/><circle cx="7" cy="7" r="5.1" fill="#E4483E"/><path d="M3.6 7 L10.4 7" stroke="#fff" stroke-width="2.1"/></svg><span style="left:36px">Baja</span></div>
<div class="btn" style="left:928px;width:94px"><svg class="abs" style="left:5px;top:1px" width="15" height="15" viewBox="0 0 15 15"><path d="M2.6 11.8 L11.4 3" stroke="#E09A38" stroke-width="4.2" stroke-linecap="round"/><path d="M3 11.4 L11 3.4" stroke="#F8DC58" stroke-width="2.2"/><path d="M10.6 1.8 L13 4.2" stroke="#F0A890" stroke-width="1.8"/><path d="M0.8 13.6 L1.6 10.8 L3.8 13 Z" fill="#D8A060"/><path d="M0.8 13.6 L1.2 12.4 L2 13.2 Z" fill="#333"/></svg><span style="left:27px">Modificar</span></div>
<div class="btn" style="left:1024px;width:93px"><svg class="abs" style="left:6px;top:2px" width="13" height="13" viewBox="0 0 13 13"><rect x="3.4" y="1" width="7.6" height="9.6" rx="0.8" fill="#E8E8E8" stroke="#9A9A9A" stroke-width="0.9"/><circle cx="4.8" cy="4.6" r="3.2" fill="#52D0E8" stroke="#8A9AA8" stroke-width="1.1"/><circle cx="4" cy="3.8" r="1.1" fill="#C8F4FC"/><path d="M7 7 L10.8 10.8" stroke="#2050C8" stroke-width="2.1" stroke-linecap="round"/></svg><span style="left:31px">Visualizar</span></div>
<div class="btn" style="left:1120px;width:94px"><svg class="abs" style="left:4px;top:0px" width="16" height="16" viewBox="0 0 16 16"><rect x="1.6" y="3" width="7.4" height="10.8" fill="#8C8C8C"/><rect x="2.6" y="4" width="5.6" height="8.8" fill="#B8B8B8"/><path d="M8.6 2.6 L14.6 1.2 L14.6 14.8 L8.6 13.6 Z" fill="#E4A860" stroke="#B87830" stroke-width="0.7"/><rect x="12.6" y="7.4" width="1" height="1.2" fill="#F8E060"/><path d="M1.2 8 L4.8 4.8 L4.8 6.6 L8.2 6.6 L8.2 9.4 L4.8 9.4 L4.8 11.2 Z" fill="#38B038" stroke="#1E7A1E" stroke-width="0.5"/></svg><span style="left:37px">Salir</span></div>
<!-- status bar -->
<div class="abs" style="left:0;top:746px;width:1228px;height:22px;background:#ECE9D8"></div>
<div class="sp" style="left:0;width:83px"><span style="left:3px;letter-spacing:0">23:54</span></div>
<div class="sp" style="left:85px;width:81px"><span style="left:3px;letter-spacing:0.22px">23/02/2012</span></div>
<div class="sp" style="left:168px;width:203px"><span style="left:0px">Página 1 de 1, 64 por Página</span><span style="left:153px">64 Equipos</span></div>
<div class="sp" style="left:373px;width:81px"></div>
<div class="sp" style="left:456px;width:753px"><span style="left:2px">3 Medidas Preventivas asignadas a Linea impresion 1</span></div>
<div class="abs" style="left:0;top:766px;width:1228px;height:2px;background:linear-gradient(to bottom,#3A78DE,#2560D0)"></div>

<style>
.c.m{letter-spacing:-0.14px}
.c.eq{letter-spacing:-0.25px}
.c.eq1{letter-spacing:-0.42px}
.c.rs{letter-spacing:-0.72px}
.hc.h2{height:13px;border-top-color:#A9A697}
.hc.h2 span{top:1px}
</style>

</body></html>
